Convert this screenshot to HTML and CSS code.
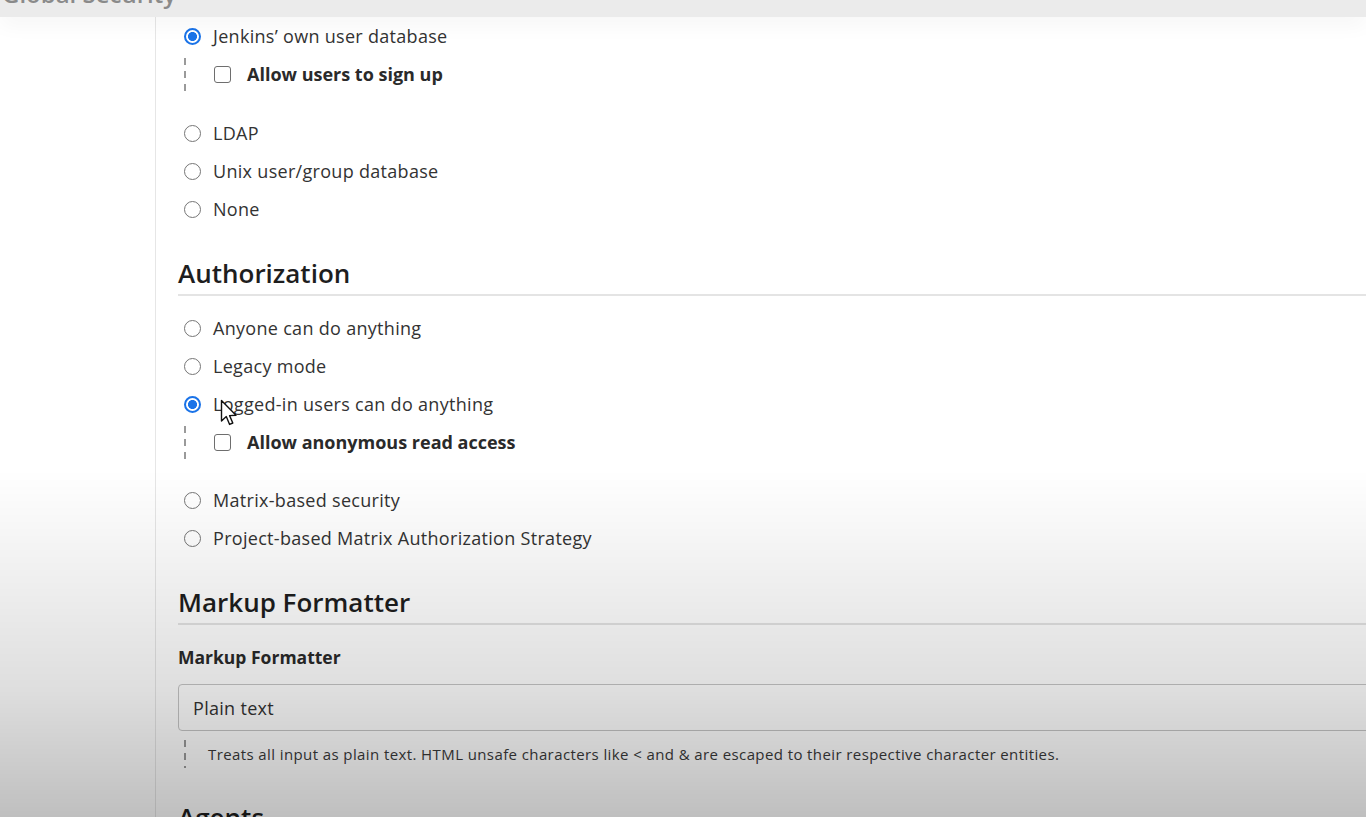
FILE: index.html
```html
<!DOCTYPE html>
<html lang="en">
<head>
<meta charset="utf-8">
<title>Configure Global Security</title>
<link rel="stylesheet" href="styles.css">
</head>
<body>
<header class="topbar">
  <span class="topbar-title">Global Security</span>
</header>
<div class="layout">
  <aside class="sidebar"></aside>
  <main class="main">
    <section class="group">
      <label class="radio-row"><span class="radio checked"></span><span class="lbl">Jenkins’ own user database</span></label>
      <div class="nested first">
        <label class="check-row"><span class="checkbox"></span><span class="lbl bold">Allow users to sign up</span></label>
      </div>
      <label class="radio-row"><span class="radio"></span><span class="lbl">LDAP</span></label>
      <label class="radio-row"><span class="radio"></span><span class="lbl">Unix user/group database</span></label>
      <label class="radio-row"><span class="radio"></span><span class="lbl">None</span></label>
    </section>

    <h2 class="section-title">Authorization</h2>
    <section class="group">
      <label class="radio-row"><span class="radio"></span><span class="lbl">Anyone can do anything</span></label>
      <label class="radio-row"><span class="radio"></span><span class="lbl">Legacy mode</span></label>
      <label class="radio-row"><span class="radio checked"></span><span class="lbl">Logged-in users can do anything</span></label>
      <div class="nested second">
        <label class="check-row"><span class="checkbox"></span><span class="lbl bold">Allow anonymous read access</span></label>
      </div>
      <label class="radio-row"><span class="radio"></span><span class="lbl">Matrix-based security</span></label>
      <label class="radio-row"><span class="radio"></span><span class="lbl">Project-based Matrix Authorization Strategy</span></label>
    </section>

    <h2 class="section-title">Markup Formatter</h2>
    <div class="field-label">Markup Formatter</div>
    <div class="select">Plain text</div>
    <div class="help">
      <span class="help-text">Treats all input as plain text. HTML unsafe characters like &lt; and &amp; are escaped to their respective character entities.</span>
    </div>

    <h2 class="section-title cut">Agents</h2>
  </main>
</div>
<svg class="cursor" width="20" height="30" viewBox="0 0 20 30" aria-hidden="true">
  <path d="M1.5 1.5 L1.5 22 L6.3 17.6 L9.6 25.4 L12.8 24 L9.6 16.6 L16 16.2 Z" fill="#fff" stroke="#111" stroke-width="1.4" stroke-linejoin="round"/>
</svg>
<div class="vignette"></div>
</body>
</html>
```

FILE: styles.css
```css
html, body {
  margin: 0;
  padding: 0;
  height: 100%;
  overflow: hidden;
  background: #fff;
}

body {
  font-family: "Open Sans", "Noto Sans", sans-serif;
  color: #333;
  font-size: 18px;
}

.topbar {
  height: 17px;
  background: #ebebeb;
  overflow: hidden;
  position: relative;
  z-index: 2;
  box-shadow: 0 6px 22px rgba(0, 0, 0, 0.05);
}

.topbar-title {
  display: block;
  margin-top: -21px;
  padding-left: 2px;
  font-size: 24px;
  line-height: 30px;
  font-weight: 600;
  color: #4a4a4a;
  opacity: 0.6;
}

.layout {
  display: flex;
  height: 800px;
}

.sidebar {
  width: 155px;
  flex: none;
  border-right: 1px solid #e6e6e6;
}

.main {
  flex: none;
  width: 1400px;
  padding-left: 22px;
}

.group {
  display: flex;
  flex-direction: column;
}

.radio-row {
  display: flex;
  align-items: center;
  height: 38px;
}

.radio {
  width: 17px;
  height: 17px;
  box-sizing: border-box;
  border: 1.5px solid #767676;
  border-radius: 50%;
  margin-left: 6px;
  margin-right: 12px;
  flex: none;
  background: #fff;
}

.radio.checked {
  border: 2px solid #1a73e8;
  background: radial-gradient(circle, #1a73e8 0 4.2px, #fff 4.8px);
}

.lbl {
  color: #333;
  white-space: nowrap;
  letter-spacing: 0.3px;
}

.lbl.bold {
  font-weight: 700;
  color: #2a2a2a;
  letter-spacing: 0;
}

.nested {
  height: 42px;
  position: relative;
  display: flex;
  align-items: center;
  padding-left: 36px;
  margin-bottom: 17px;
  background: repeating-linear-gradient(to bottom, #9a9a9a 0 7px, transparent 7px 13px) 6px 3px / 2px 39px no-repeat;
}

.nested.second {
  margin-bottom: 16px;
}

.check-row {
  display: flex;
  align-items: center;
  margin-top: -4px;
}

.checkbox {
  width: 17px;
  height: 17px;
  box-sizing: border-box;
  border: 1.5px solid #6e6e6e;
  border-radius: 3px;
  margin-right: 16px;
  background: #fff;
  flex: none;
}

.section-title {
  margin: 24px 0 0;
  height: 42px;
  line-height: 42px;
  font-size: 26px;
  font-weight: 600;
  color: #1e1e1e;
  border-bottom: 2px solid #e4e4e4;
}

.section-title + .group {
  margin-top: 13px;
}

.field-label {
  margin-top: 20px;
  height: 24px;
  line-height: 24px;
  font-size: 17.5px;
  font-weight: 700;
  color: #2a2a2a;
}

.select {
  margin-top: 15px;
  height: 47px;
  box-sizing: border-box;
  border: 1px solid #c6c6c6;
  border-radius: 4px;
  padding-left: 14px;
  display: flex;
  align-items: center;
  color: #333;
  letter-spacing: 0.3px;
}

.help {
  margin-top: 9px;
  height: 28px;
  display: flex;
  align-items: center;
  padding-left: 30px;
  background: repeating-linear-gradient(to bottom, #9a9a9a 0 7px, transparent 7px 13px) 6px 0 / 2px 28px no-repeat;
}

.help-text {
  font-size: 15px;
  letter-spacing: 0.4px;
  color: #3a3a3a;
  white-space: nowrap;
}

.section-title.cut {
  margin-top: 28px;
  border-bottom: none;
}

.cursor {
  position: absolute;
  left: 220px;
  top: 399px;
  z-index: 5;
}

.vignette {
  position: fixed;
  inset: 0;
  pointer-events: none;
  z-index: 10;
  background: linear-gradient(to bottom,
    rgba(0, 0, 0, 0) 0,
    rgba(0, 0, 0, 0) 470px,
    rgba(0, 0, 0, 0.05) 560px,
    rgba(0, 0, 0, 0.13) 690px,
    rgba(0, 0, 0, 0.25) 817px);
}
```
